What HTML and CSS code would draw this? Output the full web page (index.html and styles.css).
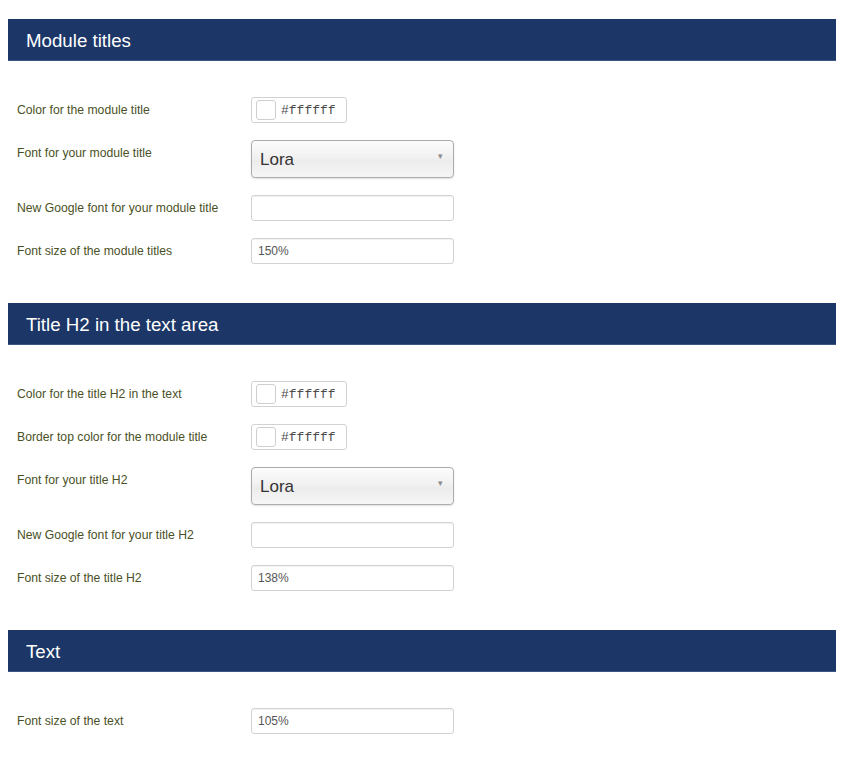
FILE: index.html
```html
<!DOCTYPE html>
<html lang="en">
<head>
    <meta charset="UTF-8">
    <title>Template settings</title>
    <link rel="stylesheet" href="styles.css">
</head>
<body>
    <div class="page">
        <section class="panel">
            <h2 class="panel-title">Module titles</h2>
            <div class="panel-body">
                <div class="field">
                    <label class="field-label">Color for the module title</label>
                    <div class="color-input"><span class="swatch"></span><span class="color-value">#ffffff</span></div>
                </div>
                <div class="field">
                    <label class="field-label">Font for your module title</label>
                    <div class="select-wrap">
                        <select class="select"><option>Lora</option></select>
                    </div>
                </div>
                <div class="field">
                    <label class="field-label">New Google font for your module title</label>
                    <input class="text-input" type="text" value="">
                </div>
                <div class="field">
                    <label class="field-label">Font size of the module titles</label>
                    <input class="text-input" type="text" value="150%">
                </div>
            </div>
        </section>

        <section class="panel">
            <h2 class="panel-title">Title H2 in the text area</h2>
            <div class="panel-body">
                <div class="field">
                    <label class="field-label">Color for the title H2 in the text</label>
                    <div class="color-input"><span class="swatch"></span><span class="color-value">#ffffff</span></div>
                </div>
                <div class="field">
                    <label class="field-label">Border top color for the module title</label>
                    <div class="color-input"><span class="swatch"></span><span class="color-value">#ffffff</span></div>
                </div>
                <div class="field">
                    <label class="field-label">Font for your title H2</label>
                    <div class="select-wrap">
                        <select class="select"><option>Lora</option></select>
                    </div>
                </div>
                <div class="field">
                    <label class="field-label">New Google font for your title H2</label>
                    <input class="text-input" type="text" value="">
                </div>
                <div class="field">
                    <label class="field-label">Font size of the title H2</label>
                    <input class="text-input" type="text" value="138%">
                </div>
            </div>
        </section>

        <section class="panel">
            <h2 class="panel-title">Text</h2>
            <div class="panel-body">
                <div class="field">
                    <label class="field-label">Font size of the text</label>
                    <input class="text-input" type="text" value="105%">
                </div>
            </div>
        </section>
    </div>
</body>
</html>
```

FILE: styles.css
```css
:root {
    --header-bg: #1b3667;
    --label-color: #4a5126;
    --input-border: #d2d2d2;
    --input-text: #555555;
}

* {
    margin: 0;
    padding: 0;
    box-sizing: border-box;
}

body {
    font-family: "Liberation Sans", Arial, sans-serif;
    background: #ffffff;
}

.page {
    padding: 19px 0 0 8px;
    width: 836px;
}

.panel {
    padding-bottom: 22px;
}

.panel-title {
    height: 42px;
    line-height: 43px;
    padding-left: 18px;
    background: var(--header-bg);
    border-bottom: 1px solid #3b5584;
    color: #ffffff;
    font-size: 18.7px;
    font-weight: normal;
}

.panel-body {
    padding-top: 36px;
}

.field {
    display: grid;
    grid-template-columns: 243px 203px;
    align-items: start;
    margin-bottom: 17px;
}

.field-label {
    padding: 4px 0 0 9px;
    line-height: 18px;
    font-size: 12.2px;
    color: var(--label-color);
}

/* color picker */
.color-input {
    display: flex;
    align-items: center;
    gap: 5px;
    width: 96px;
    height: 26px;
    padding: 0 4px;
    border: 1px solid var(--input-border);
    border-radius: 3px;
    background: #ffffff;
}

.swatch {
    width: 20px;
    height: 20px;
    border: 1px solid #cfcfcf;
    border-radius: 3px;
    background: #ffffff;
}

.color-value {
    font-family: "Liberation Mono", "DejaVu Sans Mono", monospace;
    font-size: 13px;
    color: #4a4a4a;
}

/* select */
.select-wrap {
    position: relative;
    width: 203px;
}

.select-wrap::after {
    content: "\25BE";
    position: absolute;
    right: 11px;
    top: 11px;
    font-size: 9px;
    color: #8a8a8a;
    pointer-events: none;
}

.select {
    appearance: none;
    -webkit-appearance: none;
    width: 203px;
    height: 38px;
    padding: 0 8px;
    border: 1px solid #acacac;
    border-radius: 4px;
    background: linear-gradient(#fcfcfc, #f1f1f1 45%, #ececec 55%, #f6f6f6);
    box-shadow: 0 1px 2px rgba(0, 0, 0, 0.12);
    font-family: "Liberation Sans", Arial, sans-serif;
    font-size: 17px;
    color: #333333;
}

/* text inputs */
.text-input {
    width: 203px;
    height: 26px;
    padding: 0 6px;
    border: 1px solid var(--input-border);
    border-radius: 3px;
    box-shadow: inset 0 1px 1px rgba(0, 0, 0, 0.06);
    font-family: "Liberation Sans", Arial, sans-serif;
    font-size: 12px;
    color: var(--input-text);
    outline: none;
}
```
